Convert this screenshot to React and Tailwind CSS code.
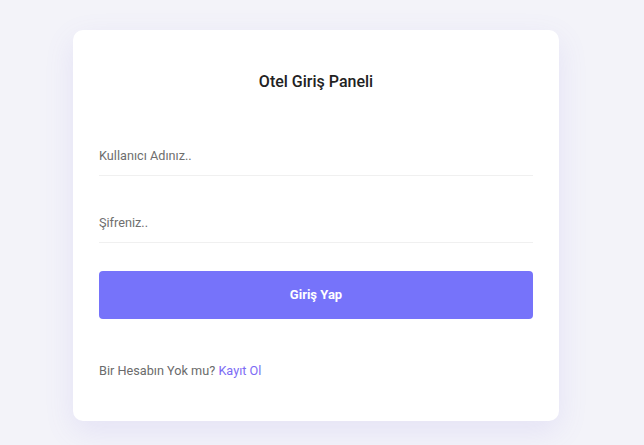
import React, { useState } from "react";

function App() {
  const [username, setUsername] = useState("");
  const [password, setPassword] = useState("");

  return (
    <div className="min-h-[445px] bg-[#f3f3f9] pt-[30px] pl-[73px] font-['Roboto',sans-serif]">
      <div className="w-[486px] h-[391px] bg-white rounded-[10px] shadow-[0_10px_30px_rgba(120,110,220,0.12)] px-[26px] pt-[40px]">
        {/* Title */}
        <h2 className="text-[16px] leading-[24px] font-medium text-[#222] text-center">Otel Giriş Paneli</h2>

        <form className="mt-[41px]" onSubmit={(e) => e.preventDefault()}>
          <input
            type="text"
            value={username}
            onChange={(e) => setUsername(e.target.value)}
            placeholder="Kullanıcı Adınız.."
            className="block w-full h-[41px] border-b border-[#f0f0f0] text-[12.7px] text-[#333] placeholder-[#6e6e6e] outline-none"
          />
          <input
            type="password"
            value={password}
            onChange={(e) => setPassword(e.target.value)}
            placeholder="Şifreniz.."
            className="block w-full h-[41px] mt-[26px] border-b border-[#f0f0f0] text-[12.7px] text-[#333] placeholder-[#6e6e6e] outline-none"
          />
          <button
            type="submit"
            className="block w-full h-[48px] mt-[28px] bg-[#7673fa] text-white text-[13px] font-bold rounded-[4px]"
          >
            Giriş Yap
          </button>
        </form>

        <p className="mt-[42px] text-[12.7px] text-[#6b6b6b]">
          Bir Hesabın Yok mu? <a href="#" className="text-[#7c6cf5]">Kayıt Ol</a>
        </p>
      </div>
    </div>
  );
}

export default App;
